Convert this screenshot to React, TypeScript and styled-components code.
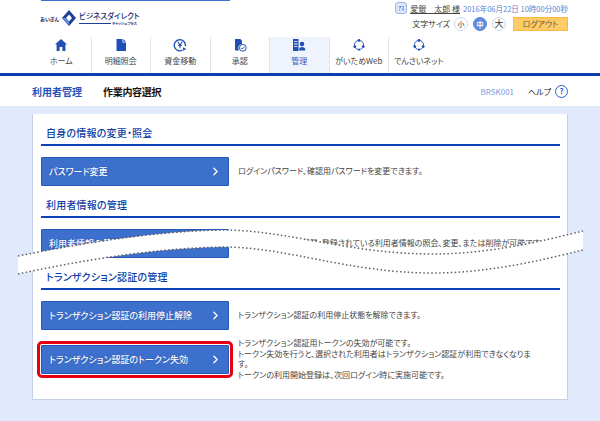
import React from "react";
import styled, { createGlobalStyle } from "styled-components";
import { ChevronRight } from "lucide-react";

const GlobalStyle = createGlobalStyle`
  html, body {
    margin: 0;
    padding: 0;
    background: #fff;
  }
  body {
    font-family: "Noto Sans CJK JP", "Liberation Sans", sans-serif;
    font-feature-settings: "palt";
    color: #333;
  }
  * {
    box-sizing: border-box;
  }
`;

const Page = styled.div`
  position: relative;
  width: 600px;
  height: 421px;
  overflow: hidden;
  display: flex;
  flex-direction: column;
`;

const TopStrip = styled.div`
  display: flex;
  height: 1px;
  padding-left: 41px;
`;

const TopTab = styled.div`
  width: 189px;
  background: #3d6fcd;
`;

const Header = styled.header`
  display: flex;
  justify-content: space-between;
  height: 36px;
  padding: 1px 32px 0 40px;
`;

const Logo = styled.div`
  display: flex;
  align-items: center;
  gap: 3px;
  height: 24px;
  margin-top: 4px;
`;

const LogoPrefix = styled.span`
  font-size: 5px;
  font-weight: 700;
  color: #1c2a55;
  width: 19px;
  white-space: nowrap;
`;

const LogoText = styled.div`
  display: flex;
  flex-direction: column;
  width: 58px;
`;

const LogoName = styled.span`
  font-size: 7.5px;
  font-weight: 500;
  line-height: 10px;
  color: #1d2b6b;
  white-space: nowrap;
`;

const LogoSub = styled.div`
  display: flex;
  align-items: center;
  gap: 1px;
  height: 5px;
`;

const LogoRule = styled.div`
  width: 36px;
  height: 1px;
  background: #1d3f9a;
`;

const LogoSmall = styled.span`
  font-size: 3.5px;
  font-weight: 700;
  color: #1d2b6b;
  white-space: nowrap;
`;

const UserBlock = styled.div`
  display: flex;
  flex-direction: column;
  align-items: flex-end;
`;

const UserRow = styled.div`
  display: flex;
  align-items: center;
  height: 12px;
  gap: 3px;
`;

const UserBadge = styled.span`
  width: 12px;
  height: 12px;
  border: 1px solid #9db4e4;
  border-radius: 3px;
  background: #dfe8fa;
  color: #2f5cc0;
  font-size: 6px;
  line-height: 10px;
  text-align: center;
`;

const UserName = styled.span`
  font-size: 8px;
  color: #444;
  text-decoration: underline;
  white-space: pre;
`;

const Timestamp = styled.span`
  font-size: 7.5px;
  color: #5a7fd0;
  white-space: nowrap;
`;

const SizeRow = styled.div`
  display: flex;
  align-items: center;
  margin-top: 2px;
  height: 15px;
`;

const SizeLabel = styled.span`
  font-size: 8px;
  color: #333;
  margin-right: 4px;
`;

const SizeButton = styled.span<{ $active?: boolean; $large?: boolean }>`
  width: 14px;
  height: 14px;
  margin-right: 5px;
  border-radius: 50%;
  border: 1px solid ${({ $active }) => ($active ? "#5f8bdb" : "#c9d8f4")};
  background: ${({ $active }) => ($active ? "#5f8bdb" : "#fff")};
  color: ${({ $active }) => ($active ? "#fff" : "#333")};
  font-size: ${({ $large }) => ($large ? "9px" : "7px")};
  font-weight: ${({ $active }) => ($active ? 700 : 400)};
  line-height: 12px;
  text-align: center;
`;

const LogoutButton = styled.span`
  width: 55px;
  height: 14px;
  margin-left: 2px;
  background: #ffcb66;
  border: 1px solid #f7b847;
  color: #6a5a35;
  font-size: 8px;
  line-height: 12px;
  text-align: center;
`;

const Nav = styled.nav`
  display: grid;
  grid-template-columns: repeat(7, 59.5px);
  height: 36px;
  padding-left: 32px;
`;

const Tab = styled.div<{ $active?: boolean; $last?: boolean }>`
  display: flex;
  flex-direction: column;
  align-items: center;
  padding-top: 1px;
  background: ${({ $active }) => ($active ? "#eef3fc" : "#fff")};
  border-right: ${({ $last }) => ($last ? "0" : "1.5px solid #e4e4e4")};
`;

const TabIcon = styled.svg`
  width: 14px;
  height: 14px;
  display: block;
  color: #1f4fb5;
`;

const TabLabel = styled.span<{ $active?: boolean }>`
  margin-top: 3px;
  font-size: 8px;
  line-height: 12px;
  color: ${({ $active }) => ($active ? "#2a63c4" : "#444")};
  white-space: nowrap;
`;

const Crumbs = styled.div`
  display: flex;
  align-items: center;
  height: 33px;
  padding: 0 32px;
  border-top: 3px solid #0b3fae;
`;

const CrumbParent = styled.span`
  font-size: 10px;
  font-weight: 700;
  color: #1f55b8;
  margin-right: 22px;
`;

const CrumbCurrent = styled.span`
  font-size: 10px;
  font-weight: 700;
  letter-spacing: -0.3px;
  color: #111;
  margin-left: -1px;
`;

const ScreenId = styled.span`
  margin-left: auto;
  font-size: 8px;
  color: #7f9ade;
`;

const HelpLabel = styled.span`
  margin-left: 14px;
  font-size: 8px;
  color: #222;
`;

const HelpIcon = styled.span`
  width: 13px;
  height: 13px;
  margin-left: 4px;
  border: 1.5px solid #2a63c4;
  border-radius: 50%;
  color: #2a63c4;
  font-size: 8px;
  font-weight: 700;
  line-height: 10px;
  text-align: center;
`;

const Main = styled.main`
  flex: 1;
  padding: 8px 32px 21px;
  background: #e0eafc;
`;

const Card = styled.section`
  height: 286px;
  padding: 7px 7.5px 0 8px;
  background: #fff;
  border-right: 1.5px solid #c6d0e6;
  border-bottom: 1.5px solid #c6d0e6;
  border-left: 1px solid #c6d0e6;
`;

const SectionTitle = styled.h2<{ $gap?: number }>`
  height: 25px;
  margin: ${({ $gap }) => $gap ?? 0}px 0 11px;
  padding: 0 5px;
  font-size: 10px;
  font-weight: 500;
  letter-spacing: 0.2px;
  line-height: 24px;
  color: #0d3fa6;
  border-bottom: 2px solid #0d42b4;
`;

const Row = styled.div`
  display: flex;
  align-items: center;
  gap: 9px;
`;

const Rows = styled.div`
  display: flex;
  flex-direction: column;
  gap: 8px;
`;

const ActionButton = styled.button<{ $highlighted?: boolean }>`
  display: flex;
  flex: none;
  align-items: center;
  justify-content: space-between;
  width: 188px;
  height: 29px;
  padding: 0 6px 0 7px;
  background: #3d6fcd;
  border: 1px solid #2457b8;
  color: #fff;
  font-family: inherit;
  font-feature-settings: inherit;
  font-size: 9px;
  font-weight: 500;
  text-shadow: 0 0 1px #123c94;
  outline: ${({ $highlighted }) => ($highlighted ? "3px solid #e60012" : "none")};
  outline-offset: 1px;
  border-radius: 1px;
`;

const Description = styled.p`
  margin: 0;
  font-size: 8px;
  line-height: 10.5px;
  color: #444;
  white-space: nowrap;
`;

const TearOverlay = styled.svg`
  position: absolute;
  left: 18px;
  top: 228px;
  width: 565px;
  height: 48px;
`;

const HomeIcon = () => (
  <TabIcon viewBox="0 0 14 14">
    <path fill="currentColor" d="M7 1 13 6.6 11.4 6.6V13H8.4V9H5.6V13H2.6V6.6H1Z" />
  </TabIcon>
);

const DocIcon = () => (
  <TabIcon viewBox="0 0 14 14">
    <path fill="currentColor" d="M2.5 1H8.5V4.6H12V13H2.5Z" />
    <path fill="currentColor" d="M9.3 1 12 3.8H9.3Z" />
  </TabIcon>
);

const YenIcon = () => (
  <TabIcon viewBox="0 0 14 14">
    <path fill="none" stroke="currentColor" strokeWidth="1.4" d="M9.5 12.2A5.6 5.6 0 1 1 12.4 8" />
    <path fill="none" stroke="currentColor" strokeWidth="1.1" d="M4.8 3.8 7 7 9.2 3.8M7 7V10.2M5.2 7.4H8.8" />
    <path fill="currentColor" d="M10 9.2 13.4 11 10 12.8Z" />
  </TabIcon>
);

const ApproveIcon = () => (
  <TabIcon viewBox="0 0 14 14">
    <path fill="currentColor" d="M2 1H7.4L9 2.8V6A4 4 0 0 0 6 12.4H2Z" />
    <circle cx="9.8" cy="9.8" r="3.4" fill="#fff" stroke="currentColor" strokeWidth="1" />
    <path fill="none" stroke="currentColor" strokeWidth="1" d="M8.2 9.8 9.4 11 11.4 8.8" />
  </TabIcon>
);

const ManageIcon = () => (
  <TabIcon viewBox="0 0 14 14">
    <path fill="currentColor" d="M1 1H6.5V13H1Z" />
    <path fill="#fff" d="M2 3.2H5.5V4H2ZM2 5.6H5.5V6.4H2ZM2 8H5.5V8.8H2Z" />
    <circle cx="10" cy="6" r="2.3" fill="currentColor" />
    <path fill="currentColor" d="M7 12.6C7 9.8 8.2 9 10 9S13.4 9.8 13.4 12.6Z" />
  </TabIcon>
);

const RingIcon = () => (
  <TabIcon viewBox="0 0 14 14">
    <circle cx="7" cy="7" r="4.6" fill="none" stroke="currentColor" strokeWidth="0.9" />
    <circle cx="7" cy="2.4" r="1.4" fill="currentColor" />
    <circle cx="2.8" cy="8.6" r="1.4" fill="currentColor" />
    <circle cx="11.2" cy="8.6" r="1.4" fill="currentColor" />
    <circle cx="7" cy="11.6" r="1.1" fill="currentColor" />
  </TabIcon>
);

const tabs = [
  { label: "ホーム", icon: <HomeIcon /> },
  { label: "明細照会", icon: <DocIcon /> },
  { label: "資金移動", icon: <YenIcon /> },
  { label: "承認", icon: <ApproveIcon /> },
  { label: "管理", icon: <ManageIcon />, active: true },
  { label: "がいためWeb", icon: <RingIcon /> },
  { label: "でんさいネット", icon: <RingIcon />, last: true },
];

const topEdge = "M0 28C70 14 140 3 205 2C270 2 330 26 415 26C470 26 520 14 565 3";
const bottomEdge = "M0 46C70 31 140 20 205 19C270 19 330 45 415 45C470 45 520 33 565 22";
const band = `${topEdge}V22C520 33 470 45 415 45C330 45 270 19 205 19C140 20 70 31 0 46Z`;

const App = (): JSX.Element => (
  <Page>
    <GlobalStyle />
    <TopStrip>
      <TopTab />
    </TopStrip>
    <Header>
      <Logo>
        <LogoPrefix>あいぎん</LogoPrefix>
        <svg width="14" height="16" viewBox="0 0 14 16">
          <path fill="#1d3f9a" d="M7 0 14 8 7 16 0 8Z" />
          <path fill="#fff" d="M7 4.6 10 8 7 11.4 4 8Z" />
          <path fill="#5f8bdb" d="M0 8 4 8 7 11.4 7 16Z" />
        </svg>
        <LogoText>
          <LogoName>ビジネスダイレクト</LogoName>
          <LogoSub>
            <LogoRule />
            <LogoSmall>キャッシュプラス</LogoSmall>
          </LogoSub>
        </LogoText>
      </Logo>
      <UserBlock>
        <UserRow>
          <UserBadge>ｱｽ</UserBadge>
          <UserName>愛銀　太郎 様</UserName>
          <Timestamp>2016年06月22日 10時00分00秒</Timestamp>
        </UserRow>
        <SizeRow>
          <SizeLabel>文字サイズ</SizeLabel>
          <SizeButton>小</SizeButton>
          <SizeButton $active>中</SizeButton>
          <SizeButton $large>大</SizeButton>
          <LogoutButton>ログアウト</LogoutButton>
        </SizeRow>
      </UserBlock>
    </Header>
    <Nav>
      {tabs.map((tab) => (
        <Tab key={tab.label} $active={tab.active} $last={tab.last}>
          {tab.icon}
          <TabLabel $active={tab.active}>{tab.label}</TabLabel>
        </Tab>
      ))}
    </Nav>
    <Crumbs>
      <CrumbParent>利用者管理</CrumbParent>
      <CrumbCurrent>作業内容選択</CrumbCurrent>
      <ScreenId>BRSK001</ScreenId>
      <HelpLabel>ヘルプ</HelpLabel>
      <HelpIcon>?</HelpIcon>
    </Crumbs>
    <Main>
      <Card>
        <SectionTitle>自身の情報の変更・照会</SectionTitle>
        <Row>
          <ActionButton>
            パスワード変更
            <ChevronRight size={13} strokeWidth={2.5} />
          </ActionButton>
          <Description>ログインパスワード、確認用パスワードを変更できます。</Description>
        </Row>
        <SectionTitle $gap={7}>利用者情報の管理</SectionTitle>
        <Row>
          <ActionButton>
            利用者情報の管理
            <ChevronRight size={13} strokeWidth={2.5} />
          </ActionButton>
          <Description>利用者情報の新規登録、登録されている利用者情報の照会、変更、または削除が可能です。</Description>
        </Row>
        <SectionTitle $gap={7}>トランザクション認証の管理</SectionTitle>
        <Rows>
          <Row>
            <ActionButton>
              トランザクション認証の利用停止解除
              <ChevronRight size={13} strokeWidth={2.5} />
            </ActionButton>
            <Description>トランザクション認証の利用停止状態を解除できます。</Description>
          </Row>
          <Row>
            <ActionButton $highlighted>
              トランザクション認証のトークン失効
              <ChevronRight size={13} strokeWidth={2.5} />
            </ActionButton>
            <Description>
              トランザクション認証用トークンの失効が可能です。
              <br />
              トークン失効を行うと、選択された利用者はトランザクション認証が利用できなくなりま
              <br />
              す。
              <br />
              トークンの利用開始登録は、次回ログイン時に実施可能です。
            </Description>
          </Row>
        </Rows>
      </Card>
    </Main>
    <TearOverlay viewBox="0 0 565 48">
      <path d={band} fill="#fff" />
      <path d={topEdge} fill="none" stroke="#5f5f5f" strokeWidth="1.5" strokeDasharray="1.5 2.4" />
      <path d={bottomEdge} fill="none" stroke="#5f5f5f" strokeWidth="1.5" strokeDasharray="1.5 2.4" />
    </TearOverlay>
  </Page>
);

export default App;
